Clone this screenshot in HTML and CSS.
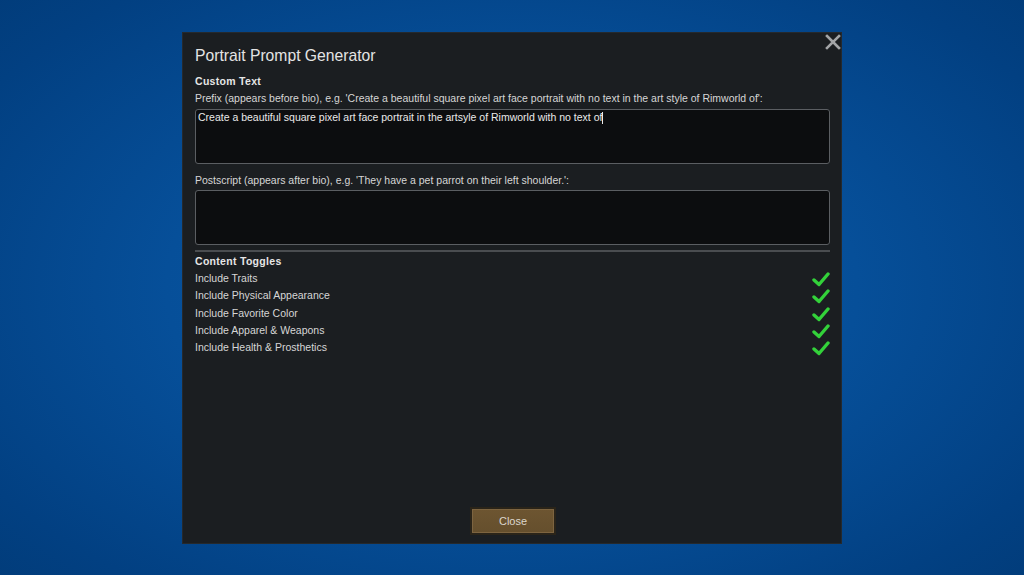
FILE: index.html
```html
<!DOCTYPE html>
<html>
<head>
<meta charset="utf-8">
<link rel="stylesheet" href="styles.css">
</head>
<body>
<div class="window">
  <div class="close-x">
    <svg width="16" height="16" viewBox="0 0 16 16"><path d="M2 2 L14 14 M14 2 L2 14" stroke="#a3a5a7" stroke-width="2.6" stroke-linecap="square"/></svg>
  </div>
  <div class="title">Portrait Prompt Generator</div>
  <div class="section">Custom Text</div>
  <div class="label">Prefix (appears before bio), e.g. 'Create a beautiful square pixel art face portrait with no text in the art style of Rimworld of':</div>
  <div class="field field1"><span class="field-text">Create a beautiful square pixel art face portrait in the artsyle of Rimworld with no text of</span><span class="caret"></span></div>
  <div class="label label2">Postscript (appears after bio), e.g. 'They have a pet parrot on their left shoulder.':</div>
  <div class="field field2"></div>
  <div class="sep"></div>
  <div class="section section2">Content Toggles</div>
  <div class="toggles">
    <div class="toggle"><span>Include Traits</span><svg class="check" width="18" height="15" viewBox="0 0 18 15"><path d="M2 8 L7 12.5 L16 2" fill="none" stroke="#33d23a" stroke-width="3.4" stroke-linecap="round" stroke-linejoin="round"/></svg></div>
    <div class="toggle"><span>Include Physical Appearance</span><svg class="check" width="18" height="15" viewBox="0 0 18 15"><path d="M2 8 L7 12.5 L16 2" fill="none" stroke="#33d23a" stroke-width="3.4" stroke-linecap="round" stroke-linejoin="round"/></svg></div>
    <div class="toggle"><span>Include Favorite Color</span><svg class="check" width="18" height="15" viewBox="0 0 18 15"><path d="M2 8 L7 12.5 L16 2" fill="none" stroke="#33d23a" stroke-width="3.4" stroke-linecap="round" stroke-linejoin="round"/></svg></div>
    <div class="toggle"><span>Include Apparel &amp; Weapons</span><svg class="check" width="18" height="15" viewBox="0 0 18 15"><path d="M2 8 L7 12.5 L16 2" fill="none" stroke="#33d23a" stroke-width="3.4" stroke-linecap="round" stroke-linejoin="round"/></svg></div>
    <div class="toggle"><span>Include Health &amp; Prosthetics</span><svg class="check" width="18" height="15" viewBox="0 0 18 15"><path d="M2 8 L7 12.5 L16 2" fill="none" stroke="#33d23a" stroke-width="3.4" stroke-linecap="round" stroke-linejoin="round"/></svg></div>
  </div>
  <div class="spacer"></div>
  <div class="footer"><button class="btn">Close</button></div>
</div>
</body>
</html>
```
FILE: styles.css
```css
html, body {
  margin: 0;
  padding: 0;
  width: 1024px;
  height: 575px;
  overflow: hidden;
}
body {
  background: radial-gradient(ellipse 75% 80% at 50% 50%, #0b5cab 0%, #064f99 45%, #024082 80%, #013a76 100%);
  font-family: "Liberation Sans", Arial, sans-serif;
  color: #dcdcdc;
  display: flex;
  justify-content: center;
  padding-top: 33px;
  box-sizing: border-box;
}
.window {
  position: relative;
  width: 658px;
  height: 510px;
  background: #1b1e21;
  box-shadow: 0 0 0 1px #25292d;
  padding: 0 11px 0 12px;
  box-sizing: border-box;
  display: flex;
  flex-direction: column;
}
.close-x {
  position: absolute;
  right: 0;
  top: 1px;
  width: 16px;
  height: 16px;
}
.close-x svg { display: block; }
.title {
  font-size: 15.7px;
  color: #e4e4e4;
  margin-top: 13px;
  height: 20px;
  line-height: 20px;
}
.section {
  font-size: 10.5px;
  font-weight: bold;
  color: #e6e6e6;
  margin-top: 9px;
  height: 13px;
  line-height: 13px;
  letter-spacing: 0.3px;
}
.label {
  font-size: 10.5px;
  color: #d6d6d6;
  margin-top: 4px;
  height: 13px;
  line-height: 13px;
}
.label2 { margin-top: 10px; }
.field {
  height: 55px;
  background: #0c0d0f;
  border: 1px solid #5b5e62;
  border-radius: 3px;
  box-sizing: border-box;
  padding: 1px 2px;
  font-size: 10.5px;
  line-height: 13px;
  color: #eaeaea;
  display: flex;
  align-items: flex-start;
}
.field1 { margin-top: 4px; }
.field2 { margin-top: 3px; }
.caret {
  display: inline-block;
  width: 1px;
  height: 12px;
  background: #eaeaea;
  margin-top: 1px;
}
.sep {
  margin-top: 5px;
  height: 2px;
  background: #4a4d50;
}
.section2 { margin-top: 3px; }
.toggles {
  margin-top: 2px;
  display: flex;
  flex-direction: column;
}
.toggle {
  display: flex;
  justify-content: space-between;
  align-items: center;
  height: 17.25px;
  font-size: 10.5px;
  color: #d6d6d6;
}
.toggle span { line-height: 13px; }
.check { display: block; margin-top: 2px; }
.spacer { flex: 1; }
.footer {
  display: flex;
  justify-content: center;
  padding-bottom: 8px;
}
.btn {
  width: 86px;
  height: 28px;
  box-sizing: border-box;
  background: linear-gradient(#6d5531, #654f2d);
  border: 2px solid #2a2419;
  box-shadow: inset 0 0 0 1px #7d6440;
  color: #dcd6cc;
  font-family: "Liberation Sans", Arial, sans-serif;
  font-size: 11px;
  padding: 0;
  margin-left: 1px;
}
```
